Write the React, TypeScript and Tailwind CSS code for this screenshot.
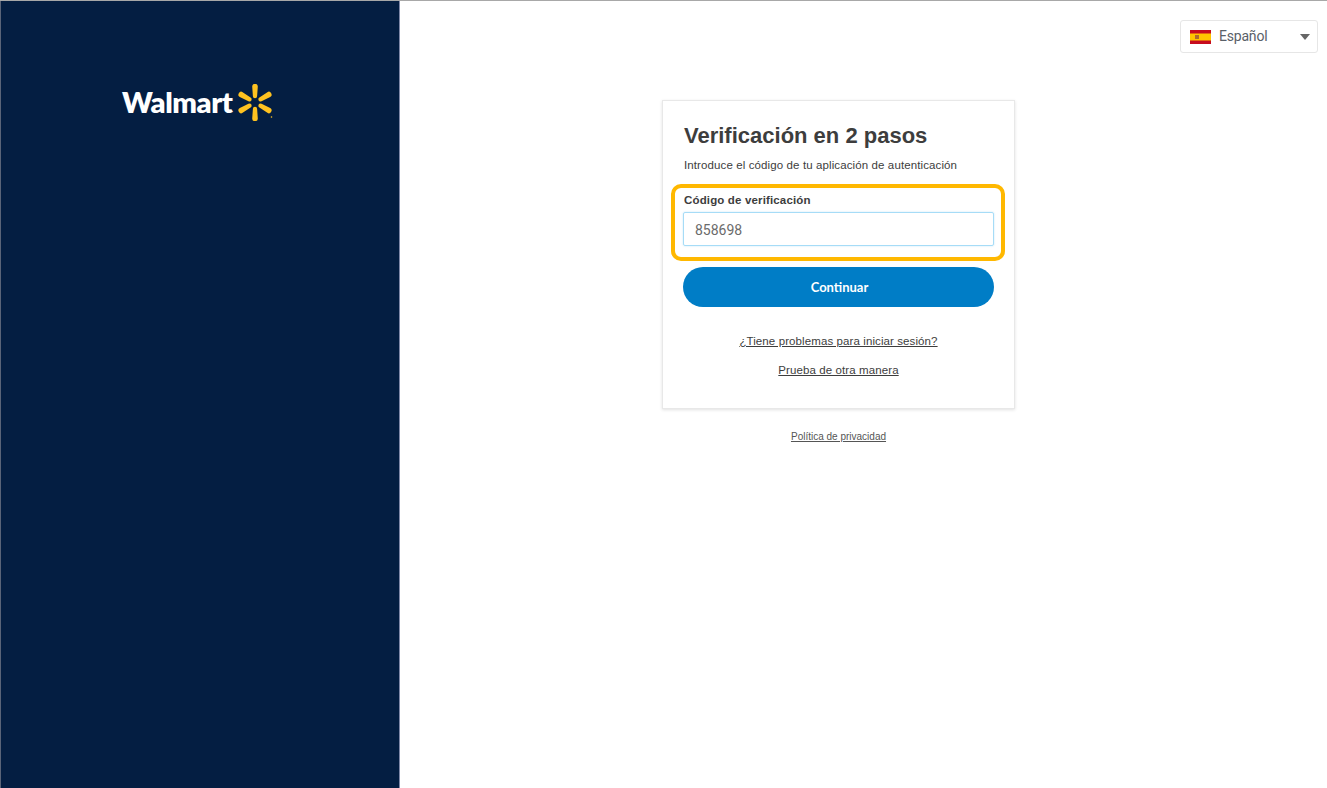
function Spark() {
  const petal = "M15.2 2.6a2.8 2.8 0 0 1 5.6 0l-.7 9.6a2.1 2.1 0 0 1-4.2 0z";
  return (
    <svg width="36" height="37" viewBox="0 0 36 37" fill="#ffc220">
      <path d={petal} />
      <path d={petal} transform="rotate(180 18 18.5)" />
      <path d={petal} transform="rotate(60 18 18.5)" />
      <path d={petal} transform="rotate(120 18 18.5)" />
      <path d={petal} transform="rotate(240 18 18.5)" />
      <path d={petal} transform="rotate(300 18 18.5)" />
      <circle cx="34.5" cy="33" r="0.8" />
    </svg>
  );
}

function SpainFlag() {
  return (
    <svg width="21" height="14" viewBox="0 0 21 14">
      <rect width="21" height="14" fill="#c60b1e" />
      <rect y="3.5" width="21" height="7" fill="#ffc400" />
      <rect x="5" y="5" width="4" height="4" fill="#ad6b2f" />
    </svg>
  );
}

export default function App() {
  return (
    <div className="h-[788px] w-[1327px] overflow-hidden bg-white font-['Liberation_Sans',sans-serif] flex flex-col">
      <div className="h-px bg-[#a8a8a8]" />
      <div className="flex flex-1">
        <aside className="w-[400px] h-full bg-[#041e42] border-l border-r border-l-[#5a6478] border-r-[#7f88a8] pt-[83px] pl-[121px]">
          <div className="flex items-start">
            <span className="-mt-[1px] font-['Lato',sans-serif] font-extrabold text-[29px] leading-[37px] text-white tracking-[-0.4px]">Walmart</span>
            <span className="ml-[4px]"><Spark /></span>
          </div>
        </aside>

        <main className="flex-1 flex flex-col">
          <div className="flex justify-end pt-[19px] pr-[9px]">
            <div className="w-[138px] h-[33px] border border-[#e6e6e6] rounded-[3px] flex items-center pl-[9px] pr-[7px] text-[14px] text-[#5a6068] font-['Roboto',sans-serif] tracking-[-0.2px]">
              <SpainFlag />
              <span className="ml-[8px] mb-[1px] flex-1">Español</span>
              <span className="w-0 h-0 border-x-[5px] border-x-transparent border-t-[6px] border-t-[#666]" />
            </div>
          </div>

          <section className="ml-[262px] mt-[47px] w-[353px] h-[309px] bg-white border border-[#e8e8e8] shadow-[0_1px_3px_rgba(0,0,0,0.12)] px-[20px] pt-[22px]">
            <h1 className="ml-px text-[22px] leading-[26px] font-bold text-[#3d3d3d]">Verificación en 2 pasos</h1>
            <p className="ml-px mt-[9px] text-[11.5px] leading-[14px] text-[#3d3d3d] tracking-[0.11px]">Introduce el código de tu aplicación de autenticación</p>

            <div className="-ml-[12px] -mr-[11px] mt-[12px] h-[77px] border-4 border-[#ffb800] rounded-[10px] pl-[8px] pr-[7px] pt-[4px]">
              <label className="block ml-px text-[11.5px] leading-[16px] font-bold text-[#3d3d3d] tracking-[0.15px]">Código de verificación</label>
              <div className="mt-[4px] pt-[2px] h-[34px] border border-[#a6dcf7] rounded-[2px] shadow-[0_0_2px_rgba(166,220,247,0.7)] flex items-center pl-[11px] text-[14px] text-[#6b6b6b] font-['Roboto',sans-serif]">858698</div>
            </div>

            <button className="mt-[6px] pt-px pl-[2px] w-full h-[40px] rounded-[20px] bg-[#007dc6] text-white text-[13px] font-bold font-['Lato',sans-serif]">Continuar</button>

            <div className="mt-[26px] text-center text-[11.5px] leading-[16px] text-[#3d3d3d] tracking-[0.1px] underline">¿Tiene problemas para iniciar sesión?</div>
            <div className="mt-[13px] text-center text-[11.5px] leading-[16px] text-[#3d3d3d] tracking-[0.1px] underline">Prueba de otra manera</div>
          </section>

          <div className="ml-[262px] w-[353px] mt-[21px] text-center text-[10px] leading-[14px] text-[#555] underline">Política de privacidad</div>
        </main>
      </div>
    </div>
  );
}
